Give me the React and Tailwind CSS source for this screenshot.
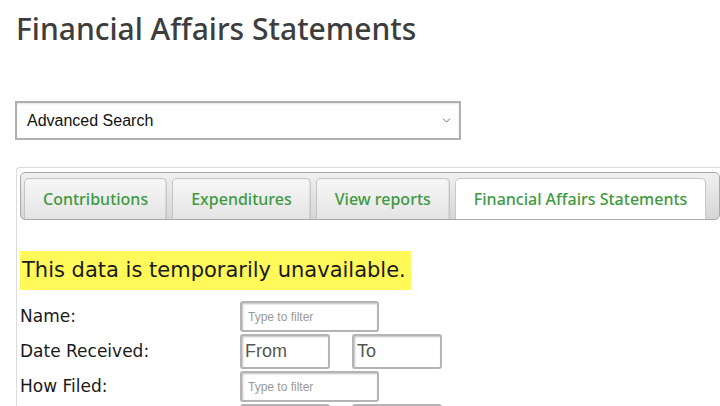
import { ChevronDown } from "lucide-react";

const tabs = ["Contributions", "Expenditures", "View reports", "Financial Affairs Statements"];

function FilterInput({ wide, placeholder, big }) {
  return (
    <div
      className={`${wide ? "w-[139px] h-[31px]" : "w-[90px] h-[35px]"} rounded-[3px] border-2 border-[#b4b4b4] bg-white shadow-[inset_1px_1px_2px_rgba(0,0,0,0.25)] flex items-center ${big ? "pl-[3px] text-[18px] text-[#555]" : "pl-[6px] text-[12px] text-[#9a9a9a]"}`}
      style={{ fontFamily: '"Liberation Sans", Arial, sans-serif' }}
    >
      {placeholder}
    </div>
  );
}

function Row({ label, children }) {
  return (
    <div className="flex items-center">
      <div className="w-[220px] text-[17px] text-[#1a1a1a]">{label}</div>
      {children}
    </div>
  );
}

export default function App() {
  return (
    <div className="w-[720px] h-[406px] overflow-hidden bg-white" style={{ fontFamily: '"DejaVu Sans", Verdana, sans-serif' }}>
      {/* Title */}
      <h1
        className="pl-[16px] pt-[9px] text-[30px] leading-[40px] font-medium text-[#3d3d3d]"
        style={{ fontFamily: '"Noto Sans", sans-serif' }}
      >
        Financial Affairs Statements
      </h1>

      {/* Search select */}
      <div
        className="ml-[15px] mt-[52px] w-[446px] h-[39px] border-2 border-[#b0b0b0] bg-white shadow-[inset_0_1px_2px_rgba(0,0,0,0.12)] flex items-center justify-between pl-[10px] pr-[6px] text-[16px] text-[#111]"
        style={{ fontFamily: '"Liberation Sans", Arial, sans-serif' }}
      >
        <span>Advanced Search</span>
        <ChevronDown className="w-[13px] h-[13px] text-[#555]" strokeWidth={1.5} />
      </div>

      {/* Panel */}
      <div className="ml-[16px] mt-[27px] border-l border-t border-[#dcdcdc] rounded-tl-[4px] pl-[3px] pt-[4px]">
        <div className="flex gap-[5px] pt-[5px] pl-[3px] rounded-[5px] border border-[#a9a9a9] bg-gradient-to-b from-[#f0f0f0] to-[#d6d6d6]">
          {tabs.map((t, i) => {
            const active = i === tabs.length - 1;
            return (
              <div
                key={t}
                className={`h-[41px] flex items-center px-[18px] rounded-t-[5px] border border-b-0 text-[16px] font-medium text-[#3f9a3f] ${
                  active
                    ? "bg-white border-[#c8c8c8]"
                    : "bg-gradient-to-b from-[#f7f7f7] to-[#e4e4e4] border-[#c4c4c4] shadow-[inset_-1px_0_1px_rgba(0,0,0,0.08)]"
                }`}
                style={{ fontFamily: '"Noto Sans", sans-serif' }}
              >
                {t}
              </div>
            );
          })}
        </div>

        {/* Content */}
        <div className="pt-[31px]">
          <div className="inline-block bg-[#fff95a] pl-[2px] pr-[5px] h-[39px] leading-[39px] text-[21px] text-[#1a1a1a]">
            This data is temporarily unavailable.
          </div>
          <div className="pt-[11px] flex flex-col gap-[2px]">
            <Row label="Name:">
              <FilterInput wide placeholder="Type to filter" />
            </Row>
            <Row label="Date Received:">
              <div className="flex gap-[22px]">
                <FilterInput big placeholder="From" />
                <FilterInput big placeholder="To" />
              </div>
            </Row>
            <Row label="How Filed:">
              <FilterInput wide placeholder="Type to filter" />
            </Row>
            <Row label="">
              <div className="flex gap-[22px]">
                <FilterInput big placeholder="" />
                <FilterInput big placeholder="" />
              </div>
            </Row>
          </div>
        </div>
      </div>
    </div>
  );
}
